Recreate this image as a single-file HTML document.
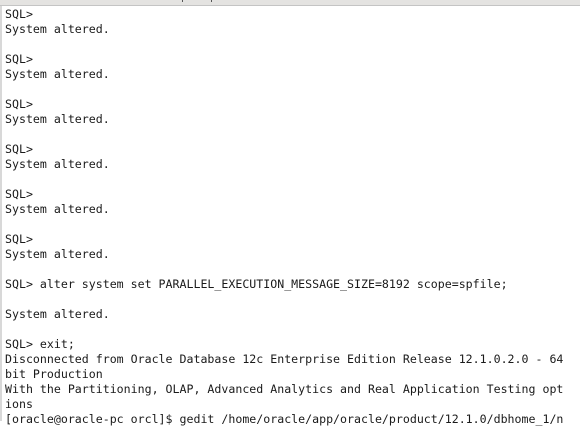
<!DOCTYPE html>
<html><head><style>
html,body{margin:0;padding:0;width:580px;height:421px;overflow:hidden;background:#fff;}
.bar{position:absolute;left:0;top:0;width:580px;height:5px;background:#e4e3e1;border-bottom:1px solid #c4c4c4;}
.lb{position:absolute;left:0;top:6px;width:2px;height:415px;background:#d8d8d8;}
pre{position:absolute;left:5px;top:7px;margin:0;font-family:"DejaVu Sans Mono","Liberation Mono",monospace;font-size:11.6px;line-height:15px;color:#1a1a1a;}
.t1{position:absolute;left:182px;top:0;width:1px;height:2px;background:#555;}
.t2{position:absolute;left:211px;top:0;width:1px;height:2px;background:#555;}
</style></head><body>
<div class="bar"></div><div class="t1"></div><div class="t2"></div>
<div class="lb"></div>
<pre>SQL&gt;
System altered.

SQL&gt;
System altered.

SQL&gt;
System altered.

SQL&gt;
System altered.

SQL&gt;
System altered.

SQL&gt;
System altered.

SQL&gt; alter system set PARALLEL_EXECUTION_MESSAGE_SIZE=8192 scope=spfile;

System altered.

SQL&gt; exit;
Disconnected from Oracle Database 12c Enterprise Edition Release 12.1.0.2.0 - 64
bit Production
With the Partitioning, OLAP, Advanced Analytics and Real Application Testing opt
ions
[oracle@oracle-pc orcl]$ gedit /home/oracle/app/oracle/product/12.1.0/dbhome_1/n</pre>
</body></html>
